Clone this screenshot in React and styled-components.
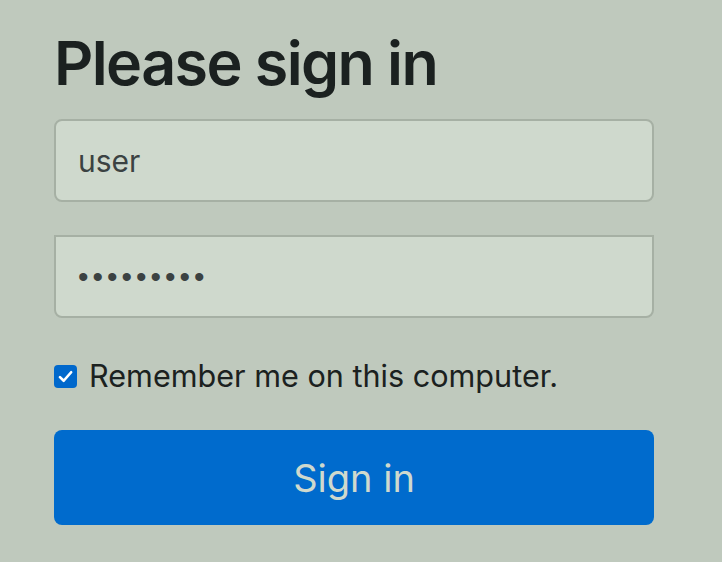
import React from 'react';
import styled, { createGlobalStyle } from 'styled-components';

const GlobalStyle = createGlobalStyle`
  html, body {
    margin: 0;
    padding: 0;
    background-color: #bfc9bd;
  }
  body {
    font-family: Inter, "Noto Sans", "Liberation Sans", sans-serif;
    color: #1b2120;
  }
`;

const Page = styled.div`
  width: 722px;
  height: 562px;
  overflow: hidden;
  padding: 26px 0 0 54px;
  box-sizing: border-box;
`;

const Form = styled.form`
  width: 600px;
  display: flex;
  flex-direction: column;
`;

const Heading = styled.h1`
  margin: 0 0 19px;
  font-size: 61px;
  font-weight: 600;
  line-height: 74px;
  letter-spacing: -1.6px;
`;

const Field = styled.input`
  box-sizing: border-box;
  width: 100%;
  height: 83px;
  padding: 0 22px;
  margin: 0;
  border: 2px solid #a6b0a4;
  background-color: #cfd9cd;
  color: #3b4242;
  font-family: ${p => (p.type === 'password' ? '"Liberation Sans", sans-serif' : 'inherit')};
  font-size: 30px;
  outline: none;
  border-radius: ${p => (p.$top ? '8px' : '0 0 8px 8px')};
  margin-bottom: ${p => (p.$top ? '33px' : '0')};
  letter-spacing: ${p => (p.type === 'password' ? '4px' : '0')};
`;

const CheckRow = styled.label`
  display: flex;
  align-items: center;
  gap: 12px;
  margin-top: 40px;
  font-size: 30.6px;
  line-height: 36px;
`;

const Box = styled.span`
  width: 23px;
  height: 23px;
  border-radius: 4px;
  background-color: #0068cc;
  display: flex;
  align-items: center;
  justify-content: center;
  flex-shrink: 0;
`;

const Button = styled.button`
  margin-top: 36px;
  height: 95px;
  width: 100%;
  border: none;
  border-radius: 8px;
  background-color: #006bcd;
  color: #cfd9cd;
  font-family: inherit;
  font-size: 38px;
  cursor: pointer;
`;

export default function App() {
  return (
    <>
      <GlobalStyle />
      <Page>
        <Form onSubmit={e => e.preventDefault()}>
          <Heading>Please sign in</Heading>
          <Field $top type="text" value="user" readOnly />
          <Field type="password" value="123456789" readOnly />
          <CheckRow>
            <Box>
              <svg width="17" height="17" viewBox="0 0 16 16">
                <path d="M2.8 8.6 L6.3 12 L13.3 4" fill="none" stroke="#fff" strokeWidth="2.5" strokeLinecap="round" strokeLinejoin="round" />
              </svg>
            </Box>
            Remember me on this computer.
          </CheckRow>
          <Button type="submit">Sign in</Button>
        </Form>
      </Page>
    </>
  );
}
